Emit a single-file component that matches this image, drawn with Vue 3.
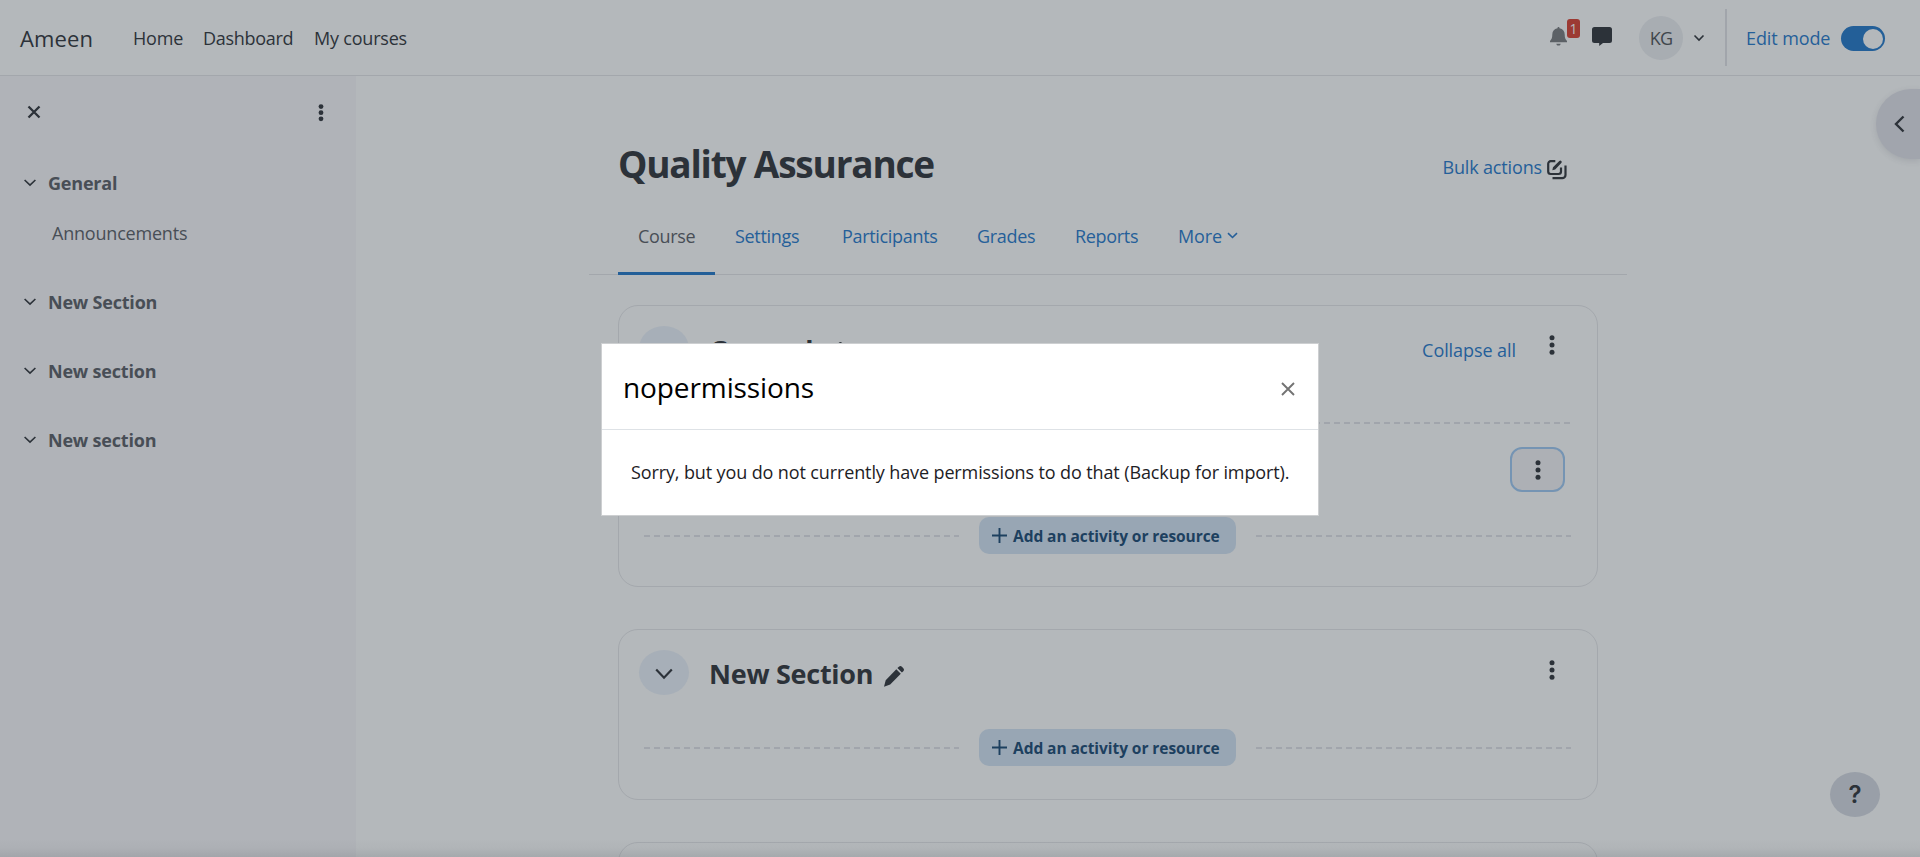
<script setup>
const navLinks = [
  { label: 'Home', cls: 'home' },
  { label: 'Dashboard', cls: 'dash' },
  { label: 'My courses', cls: 'mine' },
]
const sections = [
  { label: 'General', items: ['Announcements'] },
  { label: 'New Section', items: [] },
  { label: 'New section', items: [] },
  { label: 'New section', items: [] },
]
const tabs = [
  { label: 'Course', cls: 't1', active: true },
  { label: 'Settings', cls: 't2' },
  { label: 'Participants', cls: 't3' },
  { label: 'Grades', cls: 't4' },
  { label: 'Reports', cls: 't5' },
]
const cards = [
  { title: 'General', cls: 'first', collapse: true },
  { title: 'New Section', cls: 'second' },
]
</script>

<template>
  <div class="page">
    <header class="navbar">
      <span class="brand">Ameen</span>
      <nav class="links">
        <a v-for="l in navLinks" :key="l.label" :class="l.cls">{{ l.label }}</a>
      </nav>
      <div class="tools">
        <div class="bell">
          <svg width="17" height="19" viewBox="0 0 17 19"><path d="M8.500 0C9.200 0 9.500.5 9.500 1.300 13 2 14.700 4.500 14.700 7.500c0 3.500.8 5 2.300 6.500v1.300H0V14c1.500-1.500 2.300-3 2.300-6.500 0-3 1.700-5.500 5.200-6.200C7.500.5 7.800 0 8.500 0zM6.300 16.700h4.400c-.2 1.300-1 1.900-2.200 1.900s-2-.6-2.200-1.900z" fill="#5c6166"/></svg>
          <span class="count">1</span>
        </div>
        <svg class="chat" width="20" height="19" viewBox="0 0 20 19"><path d="M2.500 0h15A2.500 2.500 0 0 1 20 2.500v11a2.500 2.500 0 0 1-2.500 2.500H11l-3.800 3V16H2.500A2.500 2.500 0 0 1 0 13.500v-11A2.500 2.500 0 0 1 2.500 0z" fill="#2c3239"/></svg>
        <span class="avatar">KG</span>
        <svg class="caret" width="12" height="8" viewBox="0 0 12 8"><path d="M1.500 1.500 6 6l4.500-4.500" class="dark thin"/></svg>
        <span class="sep"></span>
        <span class="edit">Edit mode</span>
        <span class="switch"><i></i></span>
      </div>
    </header>

    <div class="body">
      <aside class="side">
        <div class="side-head">
          <svg width="14" height="14" viewBox="0 0 14 14"><path d="M1.500 1.500l11 11M12.500 1.500l-11 11" class="dark" stroke-width="2.300"/></svg>
          <svg width="6" height="18" viewBox="0 0 6 18" class="ink"><circle cx="3" cy="2.600" r="2.400"/><circle cx="3" cy="8.700" r="2.400"/><circle cx="3" cy="14.800" r="2.400"/></svg>
        </div>
        <div v-for="(s, i) in sections" :key="i" class="group">
          <div class="group-row">
            <svg width="12" height="8" viewBox="0 0 12 8"><path d="M.6 1l5.400 5.200L11.400 1" class="dark thin"/></svg>
            <span>{{ s.label }}</span>
          </div>
          <div v-for="a in s.items" :key="a" class="leaf">{{ a }}</div>
        </div>
      </aside>

      <main class="main">
        <div class="head">
          <h1>Quality Assurance</h1>
          <a class="bulk">
            <span>Bulk actions</span>
            <svg width="20" height="20" viewBox="0 0 20 20"><path d="M8.300 1.200H3.700A2.500 2.500 0 0 0 1.200 3.700v7.800A2.500 2.500 0 0 0 3.700 14h7.800a2.500 2.500 0 0 0 2.500-2.500V7.500M5.500 18.200h9.800a3.200 3.200 0 0 0 3.200-3.200V5.500" class="dark" stroke-width="2.200"/><path d="M5.300 10.300l.7-3L12.300 1a1.300 1.300 0 0 1 2 2L8.200 9.500z" class="ink"/></svg>
          </a>
        </div>
        <div class="tabs">
          <a v-for="t in tabs" :key="t.label" :class="['tab', t.cls, { active: t.active }]"><span>{{ t.label }}</span></a>
          <a class="tab more"><span>More</span><svg width="11" height="8" viewBox="0 0 11 8"><path d="M1 1.200l4.500 4.300L10 1.200" fill="none" stroke="#255f99" stroke-width="1.600"/></svg></a>
        </div>

        <section v-for="c in cards" :key="c.title" :class="['card', c.cls]">
          <div class="card-head">
            <span class="toggle"><svg width="18" height="12" viewBox="0 0 18 12"><path d="M1.200 1.500 9 9.700l7.800-8.200" class="dark" stroke-width="2.200"/></svg></span>
            <h3>{{ c.title }}</h3>
            <svg class="pencil" width="20" height="21" viewBox="0 0 20 21"><path d="M12.300 3.200l4.500 4.500L6.200 18.500 0 20.800l1.700-6.500zM13.400 2.100l1.500-1.400a2.200 2.200 0 0 1 3 0l1.400 1.500a2.200 2.200 0 0 1 0 3l-1.400 1.400z" class="ink"/></svg>
            <div class="card-tools">
              <a v-if="c.collapse">Collapse all</a>
              <svg width="6" height="20" viewBox="0 0 6 20" class="ink"><circle cx="3" cy="2.700" r="2.500"/><circle cx="3" cy="10" r="2.500"/><circle cx="3" cy="17.300" r="2.500"/></svg>
            </div>
          </div>
          <div v-if="c.collapse" class="activity">
            <div class="dash"></div>
            <button class="kebab"><svg width="6" height="20" viewBox="0 0 6 20" class="ink"><circle cx="3" cy="2.700" r="2.500"/><circle cx="3" cy="10" r="2.500"/><circle cx="3" cy="17.300" r="2.500"/></svg></button>
          </div>
          <div class="add-row">
            <div class="dash"></div>
            <button class="add"><svg width="15" height="15" viewBox="0 0 15 15"><path d="M7.500 0v15M0 7.500h15" stroke="#1d405f" stroke-width="1.900"/></svg><span>Add an activity or resource</span></button>
            <div class="dash"></div>
          </div>
        </section>
        <section class="card third"></section>
      </main>
    </div>

    <div class="drawer"><svg width="11" height="18" viewBox="0 0 11 18"><path d="M9.500 1.500 2 9l7.500 7.500" class="dark" stroke-width="2.400"/></svg></div>
    <div class="help">?</div>
    <div class="bottom-shade"></div>

    <div class="modal">
      <div class="modal-head">
        <h5>nopermissions</h5>
        <svg width="14" height="14" viewBox="0 0 14 14"><path d="M1 1l12 12M13 1 1 13" stroke="#737373" stroke-width="1.900"/></svg>
      </div>
      <p>Sorry, but you do not currently have permissions to do that (Backup for import).</p>
    </div>
  </div>
</template>

<style>
body { background: #b4b8bb; overflow: hidden; }
</style>

<style scoped>
* { box-sizing: border-box; }
.page { position: relative; width: 1920px; height: 857px; overflow: hidden; background: #b4b8bb; color: #2c3239; font: 18px/28px "Open Sans", "Noto Sans", sans-serif; letter-spacing: -0.2px; white-space: nowrap; }
svg { display: block; flex: none; }
.dark { stroke: #2c3239; fill: none; }
.thin { stroke-width: 1.6; }
.ink { fill: #2c3239; }
h1, h3, h5, p { margin: 0; }
.navbar { height: 76px; border-bottom: 1px solid #a3a7ac; display: flex; align-items: center; padding-left: 20px; }
.brand { width: 113px; font-size: 22px; letter-spacing: 0.1px; padding-top: 1px; }
.links { display: flex; }
.home { width: 70px; }
.links .dash { width: 111px; letter-spacing: -0.3px; }
.tools { margin-left: auto; display: flex; align-items: center; padding-right: 35px; }
.bell { position: relative; width: 42px; margin-top: -2px; }
.count { position: absolute; left: 17px; top: -8px; width: 13px; height: 19px; border-radius: 3px; background: #9c3a33; color: #b8bbbe; font-size: 14px; line-height: 19px; text-align: center; letter-spacing: 0; }
.chat { margin-top: -2px; }
.avatar { width: 44px; height: 44px; margin-left: 27px; border-radius: 50%; background: #a8adb2; color: #40464c; text-align: center; line-height: 45px; letter-spacing: -0.7px; }
.caret { margin-left: 10px; }
.sep { width: 2px; height: 57px; margin-left: 20px; background: #a1a5ab; }
.edit { width: 95px; margin-left: 19px; color: #255f99; letter-spacing: -0.1px; }
.switch { width: 44px; height: 25px; border-radius: 13px; background: #235f98; padding: 3px; margin-top: 1px; }
.switch i { display: block; width: 20px; height: 20px; margin-left: 19px; border-radius: 50%; background: #b4b8bb; }
.body { display: flex; }
.side { width: 356px; height: 781px; background: #b0b3b8; }
.side-head { height: 75px; padding: 28px 32px 0 27px; display: flex; justify-content: space-between; align-items: flex-start; }
.side-head svg:first-child { margin-top: 1px; }
.group { margin-bottom: 41px; color: #484e56; }
.group-row { display: flex; align-items: center; height: 28px; padding: 0 0 0 24px; gap: 12px; font-weight: 700; transform: translateY(18px); }
.leaf { padding: 22px 0 0 52px; height: 50px; transform: translateY(18px); }
.main { margin-left: 233px; width: 1038px; }
.head { height: 102px; padding: 65px 60px 0 29px; display: flex; justify-content: space-between; }
h1 { font-size: 37px; line-height: 46px; letter-spacing: -1.2px; }
.bulk { display: flex; color: #255f99; gap: 5px; padding-top: 12px; letter-spacing: -0.15px; }
.bulk svg { margin-top: 7px; }
.tabs { height: 97px; padding-left: 29px; display: flex; border-bottom: 1px solid #a3a7ac; letter-spacing: -0.32px; }
.tab { height: 97px; padding: 44px 0 0 20px; color: #255f99; border-bottom: 3px solid transparent; }
.tab.active { color: #484e56; border-color: #235f98; }
.t1 { width: 97px; } .t2 { width: 107px; } .t3 { width: 135px; } .t4 { width: 98px; } .t5 { width: 104px; }
.more { display: flex; gap: 5px; padding-left: 19px; letter-spacing: -0.15px; }
.more svg { margin-top: 10px; }
.card { margin-left: 29px; width: 980px; border: 1px solid #a4a8ad; border-radius: 20px; }
.first { height: 282px; margin-top: 30px; }
.second { height: 171px; margin-top: 42px; }
.third { height: 100px; margin-top: 42px; }
.card-head { height: 99px; display: flex; align-items: flex-start; padding: 20px 42px 0 20px; }
.toggle { width: 50px; height: 45px; border-radius: 50%; background: #a7afb8; display: flex; align-items: center; justify-content: center; padding-top: 3px; }
h3 { font-size: 27px; line-height: 38px; letter-spacing: -0.26px; margin: 5px 0 0 20px; }
.pencil { margin: 16px 0 0 11px; }
.card-tools { margin-left: auto; display: flex; color: #255f99; gap: 33px; letter-spacing: -0.07px; }
.card-tools a { margin-top: 10px; }
.card-tools svg { margin-top: 10px; }
.first .card-tools svg { margin-top: 9px; }
.activity { height: 112px; padding: 17px 0 0 25px; }
.activity .dash { width: 928px; }
div.dash { flex: 1; height: 2px; background: repeating-linear-gradient(90deg, #a1a5ac 0 6px, transparent 6px 10px); }
.kebab { display: flex; align-items: center; justify-content: center; width: 55px; height: 45px; margin: 23px 0 0 866px; border: 2px solid #7594b3; border-radius: 12px; background: #adb0b5; padding: 0; }
.add-row { display: flex; align-items: center; gap: 20px; padding: 0 26px 0 25px; height: 37px; }
.add-row .dash:first-child { flex: 0 0 315px; }
.add { width: 257px; height: 37px; padding: 0 0 0 13px; border: 0; border-radius: 10px; background: #98a6b4; color: #1d405f; display: flex; align-items: center; gap: 6px; font: 700 15.5px/24px "Open Sans", "Noto Sans", sans-serif; letter-spacing: -0.06px; }
.drawer { position: absolute; left: 1876px; top: 89px; width: 44px; height: 70px; border-radius: 35px 0 0 35px; background: #a1a5ad; box-shadow: 0 2px 6px rgba(60, 65, 75, 0.14); padding: 26px 0 0 18px; }
.help { position: absolute; left: 1830px; top: 772px; width: 50px; height: 45px; border-radius: 50%; background: #999fa8; text-align: center; font: 600 24px/45px Inter, sans-serif; }
.bottom-shade { position: absolute; left: 0; right: 0; bottom: 0; height: 18px; background: linear-gradient(rgba(90, 94, 98, 0), rgba(90, 94, 98, 0.04) 50%, rgba(90, 94, 98, 0.16)); }
.modal { position: absolute; left: 601px; top: 343px; width: 718px; height: 173px; border: 1px solid #cdcfd1; background: #fff; }
.modal-head { height: 86px; border-bottom: 1px solid #dee2e6; display: flex; justify-content: space-between; align-items: center; padding: 4px 23px 0 21px; color: #000; }
h5 { font-size: 28px; line-height: 40px; font-weight: 400; letter-spacing: -0.1px; margin-top: -4px; }
.modal p { padding: 28px 0 0 29px; color: #1d2125; letter-spacing: -0.12px; }
</style>
